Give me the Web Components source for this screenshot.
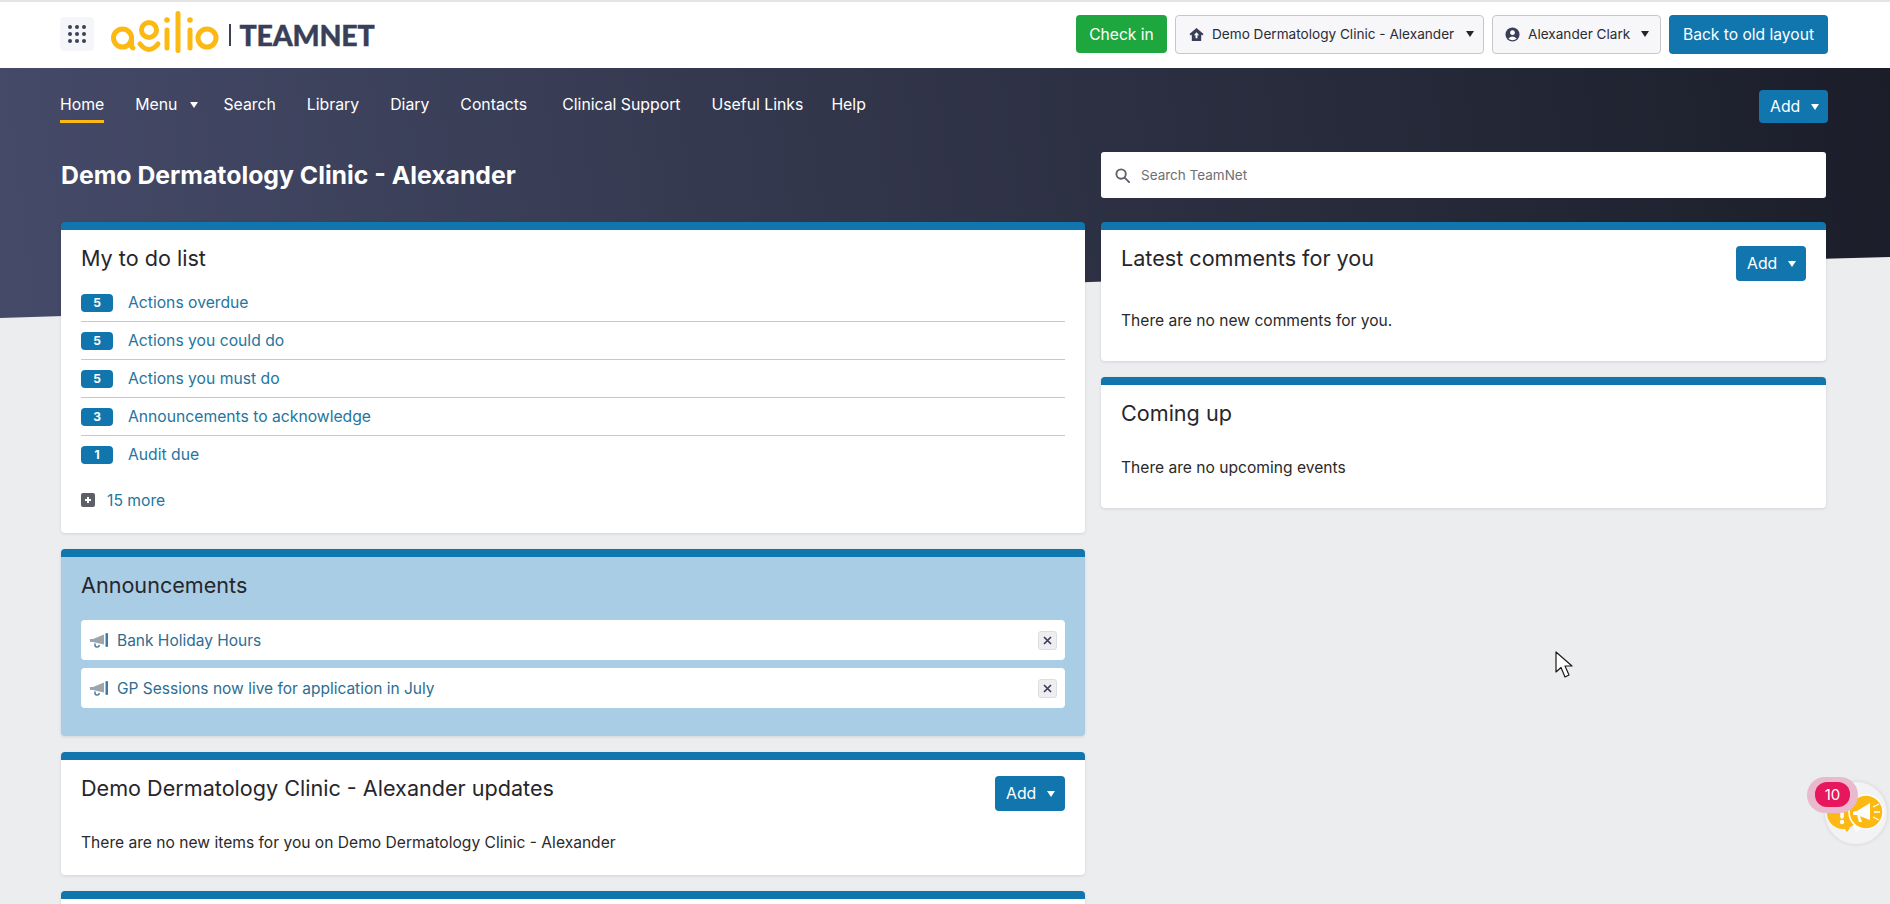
<!DOCTYPE html>
<html lang="en">
<head>
<meta charset="utf-8">
<title>TeamNet</title>
<style>
  html, body { margin: 0; height: 904px; overflow: hidden; }
  body { background: #ecedef; font-family: Inter, "Liberation Sans", sans-serif; color: #2b2b2b; }
</style>
</head>
<body>
<team-page>
  <app-header></app-header>
  <app-nav></app-nav>
  <hero-row heading="Demo Dermatology Clinic - Alexander"></hero-row>
  <main-grid>
    <ui-card slot="left" heading="My to do list" style="--pad-bottom:23px">
      <todo-row count="5" label="Actions overdue"></todo-row>
      <todo-row count="5" label="Actions you could do"></todo-row>
      <todo-row count="5" label="Actions you must do"></todo-row>
      <todo-row count="3" label="Announcements to acknowledge"></todo-row>
      <todo-row count="1" label="Audit due" last></todo-row>
      <more-row label="15 more"></more-row>
    </ui-card>
    <ui-card slot="left" heading="Announcements" tint style="--pad-bottom:28px">
      <announce-item label="Bank Holiday Hours"></announce-item>
      <announce-item label="GP Sessions now live for application in July"></announce-item>
    </ui-card>
    <ui-card slot="left" heading="Demo Dermatology Clinic - Alexander updates" style="--pad-bottom:22px">
      <add-button slot="action"></add-button>
      <card-note style="--gap:22px">There are no new items for you on Demo Dermatology Clinic - Alexander</card-note>
    </ui-card>
    <ui-card slot="left" style="--pad-bottom:80px"></ui-card>

    <ui-card slot="right" heading="Latest comments for you" style="--pad-bottom:30px">
      <add-button slot="action"></add-button>
      <card-note style="--gap:30px">There are no new comments for you.</card-note>
    </ui-card>
    <ui-card slot="right" heading="Coming up" style="--pad-bottom:30px">
      <card-note style="--gap:31px">There are no upcoming events</card-note>
    </ui-card>
  </main-grid>
  <help-widget></help-widget>
  <mouse-pointer></mouse-pointer>
</team-page>

<script>
const CARET = `<svg width="8" height="6" viewBox="0 0 8 6"><path d="M0 0h8L4 6z" fill="currentColor"/></svg>`;

function define(name, html) {
  customElements.define(name, class extends HTMLElement {
    connectedCallback() {
      if (this.shadowRoot) return;
      this.attachShadow({ mode: 'open' }).innerHTML = typeof html === 'function' ? html(this) : html;
    }
  });
}

define('team-page', `
  <style>
    :host { display: block; position: relative; height: 904px; overflow: hidden; }
    .bg { position: absolute; left: 0; top: 68px; width: 1890px; height: 250px; display: block; }
    .flow { position: relative; }
  </style>
  <svg class="bg" viewBox="0 0 1890 250" aria-hidden="true">
    <defs>
      <linearGradient id="hero" gradientUnits="userSpaceOnUse" x1="0" y1="250" x2="1890" y2="0">
        <stop offset="0" stop-color="#454a69"/>
        <stop offset=".45" stop-color="#32364b"/>
        <stop offset="1" stop-color="#1b1e29"/>
      </linearGradient>
    </defs>
    <path d="M0 0H1890V189Q1500 200 1090 214T0 250Z" fill="url(#hero)"/>
  </svg>
  <div class="flow"><slot></slot></div>`);

define('app-header', `
  <style>
    :host { display: flex; align-items: center; box-sizing: border-box; height: 68px; background: #fff;
            border-top: 2px solid #e4e4e4; padding: 0 62px 2px 60px; }
    .grid { width: 34px; height: 34px; background: #f5f6f9; border-radius: 4px; display: block; }
    .logo { display: flex; align-items: center; margin-left: 17px; }
    .logo svg { display: block; }
    .sep { width: 1.5px; height: 22px; background: #3c4058; margin: 2px 9px 0 8px; }
    .team { font: 900 28.5px/1 Lato, sans-serif; color: #3a3f58; letter-spacing: -.2px; margin-top: 3px; -webkit-text-stroke: .4px #3a3f58; }
    .right { margin-left: auto; display: flex; gap: 8px; align-items: center; }
    .btn { box-sizing: border-box; height: 38px; border-radius: 4px; display: flex; align-items: center; white-space: nowrap;
           font-size: 15.6px; color: #fff; padding: 0 13px; }
    .green { background: #1fa73f; width: 91px; justify-content: center; padding: 0; }
    .blue { background: #1176ae; width: 159px; justify-content: center; padding: 0; height: 39px; }
    .sel { background: #f7f7fa; border: 1px solid #c6c6cd; color: #2b2b33; font-size: 13.6px; height: 39px; gap: 8px; }
    .sel svg { flex: none; }
    .sel .caret { display: flex; color: #23242e; margin-left: auto; }
    .s1 { width: 309px; padding-left: 13px; padding-right: 9px; }
    .s2 { width: 169px; padding-left: 12px; padding-right: 11px; }
  </style>
  <svg class="grid" viewBox="0 0 34 34" fill="#3c4058">
    <circle cx="10" cy="10" r="2"/><circle cx="17" cy="10" r="2"/><circle cx="24" cy="10" r="2"/>
    <circle cx="10" cy="17" r="2"/><circle cx="17" cy="17" r="2"/><circle cx="24" cy="17" r="2"/>
    <circle cx="10" cy="24" r="2"/><circle cx="17" cy="24" r="2"/><circle cx="24" cy="24" r="2"/>
  </svg>
  <div class="logo">
    <svg width="110" height="46" viewBox="0 0 110 46" role="img" aria-label="agilio" fill="none" stroke="#fdb913" stroke-width="5" stroke-linecap="round">
      <circle cx="11.5" cy="27" r="9"/><path d="M20.5 27v6.5q0 3 1.5 3.5"/>
      <circle cx="38" cy="19" r="7.5"/><path d="M29 33q9 11 18 0"/>
      <path d="M56 19v18M67 2.5v37M79 19v18"/>
      <circle cx="96" cy="27" r="9"/>
      <circle cx="56" cy="9" r="2.8" fill="#fdb913" stroke="none"/>
      <circle cx="79" cy="9" r="2.8" fill="#fdb913" stroke="none"/>
    </svg>
    <span class="sep"></span>
    <span class="team">TEAMNET</span>
  </div>
  <div class="right">
    <span class="btn green">Check in</span>
    <span class="btn sel s1">
      <svg width="15" height="15" viewBox="0 0 16 16"><path d="M8 1 .5 7.5 2 9l1-.8V15h10V8.2l1 .8 1.5-1.5z" fill="#3a3f58"/><path d="M8 5.5 5.2 8.8H7V12h2V8.8h1.8z" fill="#fff"/></svg>
      <span>Demo Dermatology Clinic - Alexander</span><span class="caret">${CARET}</span>
    </span>
    <span class="btn sel s2">
      <svg width="15" height="15" viewBox="0 0 16 16"><circle cx="8" cy="8" r="7.5" fill="#3a3f58"/><circle cx="8" cy="6" r="2.6" fill="#fff"/><path d="M3.5 12.5q4.5-5 9 0q-4.5 3-9 0z" fill="#fff"/></svg>
      <span>Alexander Clark</span><span class="caret">${CARET}</span>
    </span>
    <span class="btn blue">Back to old layout</span>
  </div>`);

define('app-nav', `
  <style>
    :host { display: flex; align-items: flex-start; padding: 25px 62px 0 60px; color: #fff; font-size: 15.8px; }
    a { display: flex; align-items: center; line-height: 24px; padding-bottom: 3px; margin-right: 31px; border-bottom: 3px solid transparent; white-space: nowrap; }
    a.on { border-bottom-color: #fdb913; }
    a svg { margin-left: 13px; }
    .menu { margin-right: 25px; }
    .wide { margin-right: 35px; }
    .tight { margin-right: 28px; }
    add-button { margin-left: auto; margin-top: -3px; --h: 33px; --w: 69px; }
  </style>
  <a class="on">Home</a><a class="menu">Menu${CARET}</a><a>Search</a><a>Library</a><a>Diary</a><a class="wide">Contacts</a><a>Clinical Support</a><a class="tight">Useful Links</a><a>Help</a>
  <add-button></add-button>`);

define('hero-row', el => `
  <style>
    :host { display: grid; grid-template-columns: 1024px 725px; gap: 16px; align-items: center; padding: 29px 0 24px 61px; }
    h1 { margin: 0; font-size: 24.8px; font-weight: 700; color: #fff; line-height: 46px; white-space: nowrap; }
    .search { background: #fff; border-radius: 3px; height: 46px; display: flex; align-items: center; padding-left: 14px; gap: 11px; color: #6e6e72; font-size: 13.5px; }
  </style>
  <h1>${el.getAttribute('heading')}</h1>
  <div class="search">
    <svg width="15" height="15" viewBox="0 0 16 16" fill="none" stroke="#5f6068" stroke-width="2"><circle cx="6.5" cy="6.5" r="5"/><path d="M10.5 10.5 15 15" stroke-linecap="round"/></svg>
    <span>Search TeamNet</span>
  </div>`);

define('main-grid', `
  <style>
    :host { display: grid; grid-template-columns: 1024px 725px; gap: 16px; padding-left: 61px; align-items: start; }
    div { display: flex; flex-direction: column; gap: 16px; }
  </style>
  <div><slot name="left"></slot></div>
  <div><slot name="right"></slot></div>`);

define('ui-card', el => `
  <style>
    :host { display: block; box-sizing: border-box; background: #fff; border-top: 8px solid #1176ae; border-radius: 4px;
            padding: 14px 20px var(--pad-bottom, 24px); box-shadow: 0 1px 3px rgba(40,40,60,.12); }
    :host([tint]) { background: #a8cde4; }
    .head { display: flex; align-items: flex-start; justify-content: space-between; }
    h2 { margin: 0; font-size: 21.6px; font-weight: 400; line-height: 28px; color: #26262c; white-space: nowrap; }
    ::slotted(add-button) { margin-top: 2px; }
    .body { display: block; }
  </style>
  <div class="head"><h2>${el.getAttribute('heading') || ''}</h2><slot name="action"></slot></div>
  <div class="body"><slot></slot></div>`);

define('add-button', `
  <style>
    :host { display: flex; align-items: center; box-sizing: border-box; width: var(--w, 70px); height: var(--h, 35px); background: #1176ae;
            border-radius: 4px; color: #fff; font-size: 15.8px; padding-left: 11px; gap: 11px; }
  </style>
  <span>Add</span>${CARET}`);

define('card-note', `
  <style>
    :host { display: block; margin-top: var(--gap, 30px); font-size: 15.6px; line-height: 20px; color: #2a2a2a; }
  </style>
  <slot></slot>`);

define('todo-row', el => `
  <style>
    :host { display: flex; align-items: center; box-sizing: border-box; height: 38px; gap: 15px; border-bottom: 1px solid #c8c8ca; font-size: 15.7px; color: #24759f; }
    :host(:first-child) { margin-top: 12px; }
    :host([last]) { border-bottom: 0; height: 37px; }
    b { width: 32px; height: 18px; border-radius: 4px; background: #1176ae; color: #fff; font-size: 12px; font-weight: 700; display: flex; align-items: center; justify-content: center; }
  </style>
  <b>${el.getAttribute('count')}</b><span>${el.getAttribute('label')}</span>`);

define('more-row', el => `
  <style>
    :host { display: flex; align-items: center; height: 20px; gap: 12px; margin-top: 17px; font-size: 15.7px; color: #24759f; }
    svg { display: block; }
  </style>
  <svg width="14" height="14" viewBox="0 0 14 14"><rect width="14" height="14" rx="2" fill="#5c5e68"/><path d="M7 4v6M4 7h6" stroke="#fff" stroke-width="2"/></svg>
  <span>${el.getAttribute('label')}</span>`);

define('announce-item', el => `
  <style>
    :host { display: flex; align-items: center; box-sizing: border-box; height: 40px; background: #fff; border-radius: 4px; padding: 0 8px 0 9px; gap: 8px; font-size: 15.5px; color: #2d6d93; margin-top: 8px; }
    :host(:first-child) { margin-top: 21px; }
    .x { margin-left: auto; width: 19px; height: 19px; box-sizing: border-box; background: #eeeef1; border: 1px solid #dedee2; border-radius: 3px; display: flex; align-items: center; justify-content: center; }
  </style>
  <svg width="19" height="15" viewBox="0 0 19 15">
    <path d="M0 6h3L14 1.5v10L3 9H0z" fill="#9ca4ae"/>
    <rect x="15.5" y="0" width="2.5" height="14" rx="1" fill="#3d7ba0"/>
    <path d="M5 10.5q-.5 3.5 2 3.5t2-2" fill="none" stroke="#3d7ba0" stroke-width="1.5"/>
  </svg>
  <span>${el.getAttribute('label')}</span>
  <span class="x"><svg width="9" height="9" viewBox="0 0 9 9"><path d="M1 1l7 7M8 1 1 8" stroke="#3c4058" stroke-width="1.7"/></svg></span>`);

define('help-widget', `
  <style>
    :host { position: absolute; left: 1807px; top: 777px; width: 83px; height: 68px; }
    .disc { position: absolute; left: 18px; top: 5px; width: 62px; height: 62px; border-radius: 50%; background: #f3f3f6; box-shadow: 0 0 4px rgba(0,0,0,.12); box-sizing: border-box; }
    svg { position: absolute; left: 0; top: 0; }
    .halo { position: absolute; left: 0; top: 0; width: 51px; height: 36px; border-radius: 18px; background: #e9b9cd; }
    .badge { position: absolute; left: 8px; top: 5px; width: 35px; height: 25px; border-radius: 12px; background: #e6175c; color: #fff; font-size: 15px; display: flex; align-items: center; justify-content: center; }
  </style>
  <span class="disc"></span>
  <svg width="83" height="68" viewBox="0 0 83 68">
    <circle cx="36" cy="36" r="16" fill="#fdb913"/>
    <path d="M37 51l3 4 3-4z" fill="#fdb913"/>
    <path d="M35 31v9" stroke="#fff" stroke-width="3.5" stroke-linecap="round"/>
    <circle cx="35" cy="45" r="2.2" fill="#fff"/>
    <circle cx="59" cy="35" r="17" fill="#fdb913" stroke="#fff" stroke-width="1.5"/>
    <path d="M46 48l3 7 5-4z" fill="#fff"/>
    <path d="M46 35l4-1 13-8v17l-13-5h-4z" fill="#fff"/>
    <path d="M50 38l2 7h3l-2-6" fill="#fff"/>
    <path d="M66 30l6-3M67 35h6M66 40l6 3" stroke="#fff" stroke-width="1.3"/>
  </svg>
  <span class="halo"></span>
  <span class="badge">10</span>`);

define('mouse-pointer', `
  <style>
    :host { position: absolute; left: 1555px; top: 651px; width: 20px; height: 28px; }
    svg { display: block; }
  </style>
  <svg width="20" height="28" viewBox="0 0 20 28"><path d="M1 1v20l5-4.5 4 9.5 4-2-4-9h7z" fill="#fff" stroke="#1a1a1a" stroke-width="1.2" stroke-linejoin="round"/></svg>`);
</script>
</body>
</html>
